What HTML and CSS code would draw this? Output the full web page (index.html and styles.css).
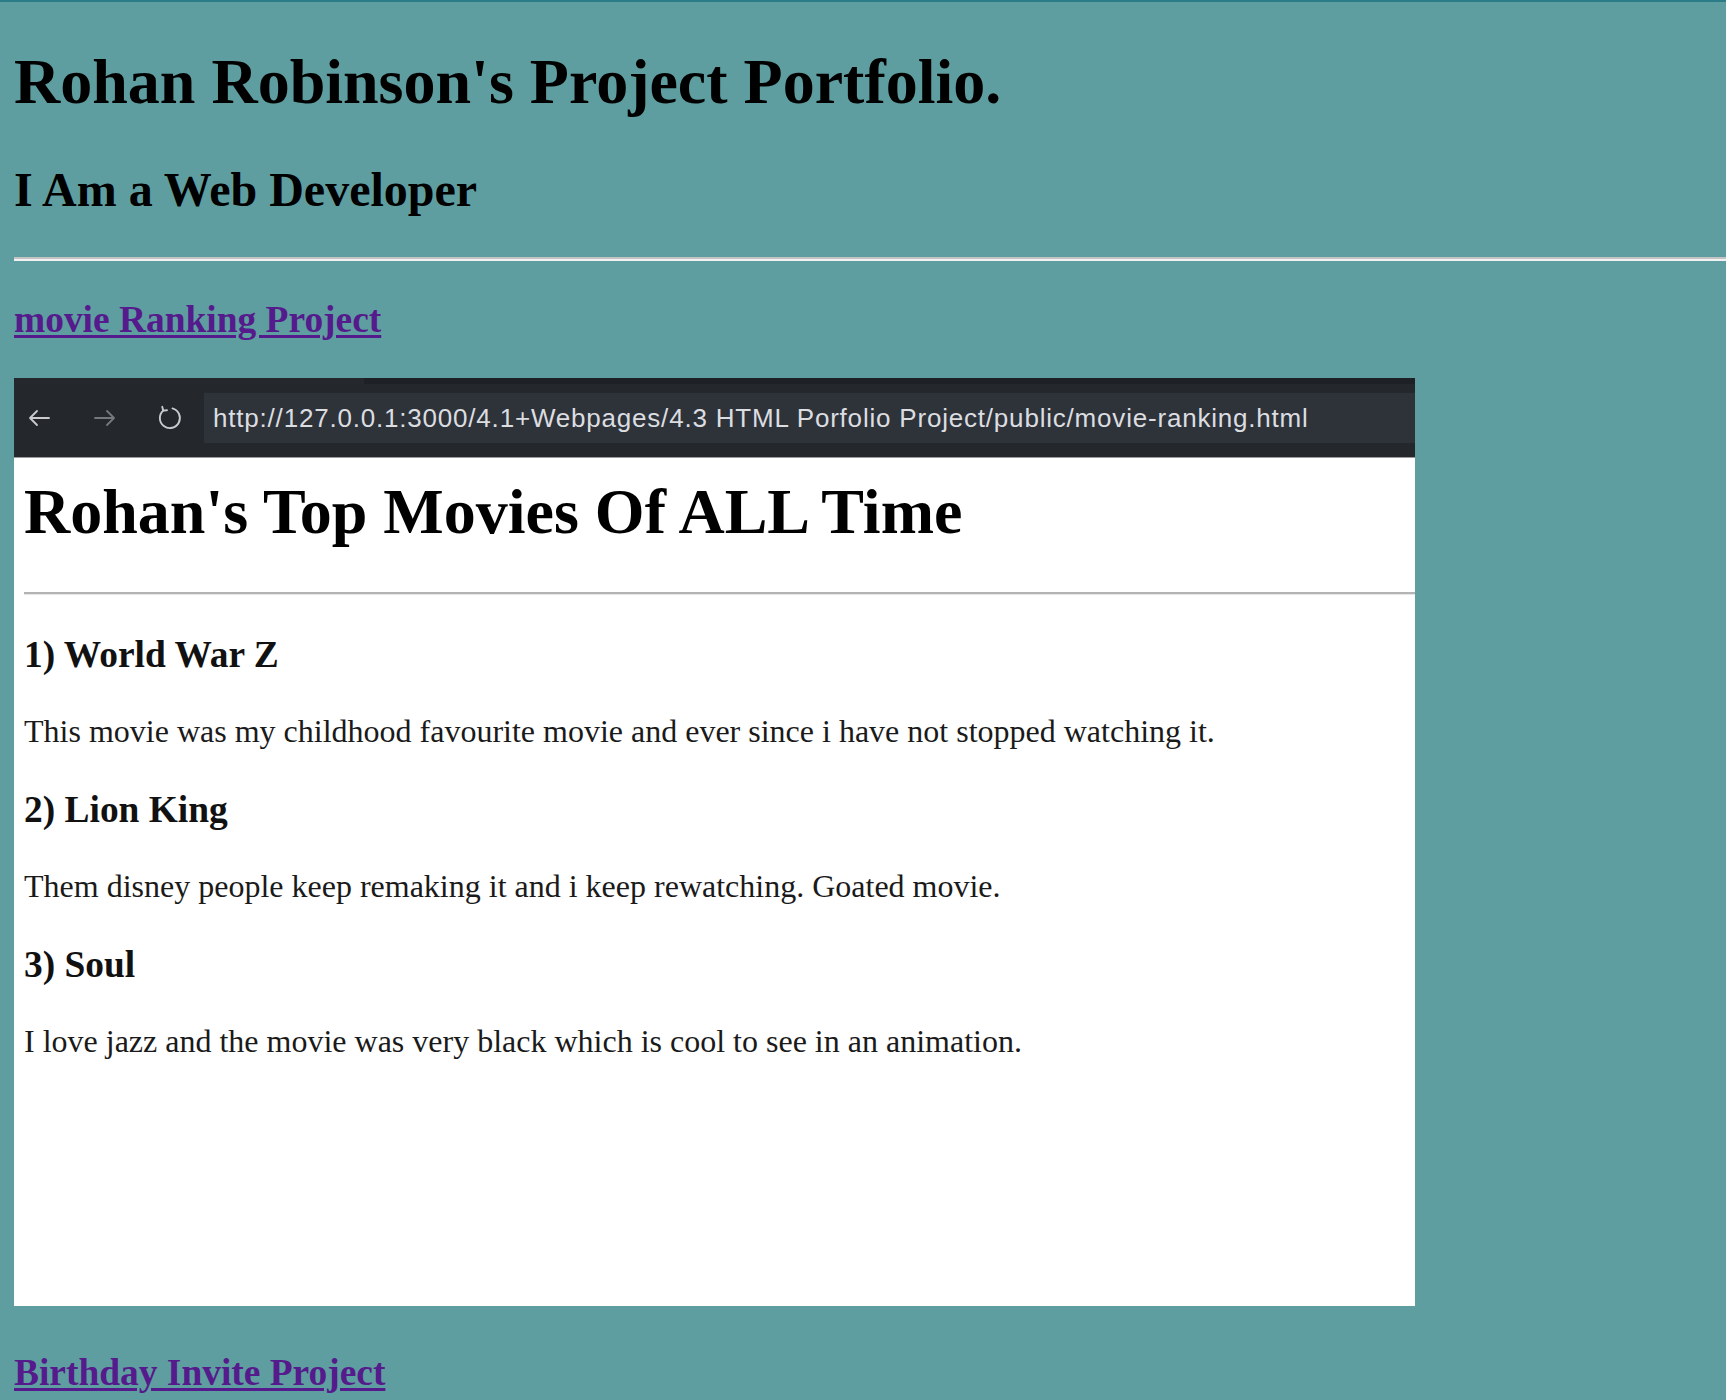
FILE: index.html
```html
<!DOCTYPE html>
<html lang="en">
<head>
<meta charset="utf-8">
<title>Rohan Robinson's Project Portfolio</title>
<link rel="stylesheet" href="styles.css">
</head>
<body>
<div class="page">
  <h1 class="title">Rohan Robinson's Project Portfolio.</h1>
  <h2 class="subtitle">I Am a Web Developer</h2>
  <hr class="rule">
  <h3 class="project"><a class="project-link" href="#">movie Ranking Project</a></h3>
  <div class="shot">
    <div class="toolbar">
      <div class="tabstrip"><span class="tabstrip-gap"></span><span class="tabstrip-dark"></span></div>
      <div class="navrow">
        <svg class="nav-icon back" viewBox="0 0 26 26" width="26" height="26"><path d="M23 13H4M11 6L4 13L11 20" fill="none" stroke="currentColor" stroke-width="1.8" stroke-linecap="round" stroke-linejoin="round"/></svg>
        <svg class="nav-icon fwd" viewBox="0 0 26 26" width="26" height="26"><path d="M3 13H22M15 6L22 13L15 20" fill="none" stroke="currentColor" stroke-width="1.8" stroke-linecap="round" stroke-linejoin="round"/></svg>
        <svg class="nav-icon reload" viewBox="0 0 26 26" width="26" height="26"><path d="M15.5 3.4A10 10 0 1 1 6.2 5.6" fill="none" stroke="currentColor" stroke-width="1.9" stroke-linecap="round"/><path d="M5.2 1.8L6.2 5.6L10 5.2" fill="none" stroke="currentColor" stroke-width="1.9" stroke-linecap="round" stroke-linejoin="round"/></svg>
        <div class="urlbar">http://127.0.0.1:3000/4.1+Webpages/4.3 HTML Porfolio Project/public/movie-ranking.html</div>
      </div>
    </div>
    <div class="shot-page">
      <h1 class="shot-title">Rohan's Top Movies Of ALL Time</h1>
      <hr class="shot-rule">
      <h3 class="movie">1) World War Z</h3>
      <p class="review">This movie was my childhood favourite movie and ever since i have not stopped watching it.</p>
      <h3 class="movie">2) Lion King</h3>
      <p class="review">Them disney people keep remaking it and i keep rewatching. Goated movie.</p>
      <h3 class="movie">3) Soul</h3>
      <p class="review">I love jazz and the movie was very black which is cool to see in an animation.</p>
    </div>
  </div>
  <h3 class="project project-after-shot"><a class="project-link" href="#">Birthday Invite Project</a></h3>
</div>
</body>
</html>
```

FILE: styles.css
```css
html, body {
  margin: 0;
  padding: 0;
}
body {
  background: #5f9ea0;
  font-family: "Liberation Serif", "Times New Roman", serif;
  color: #000;
  overflow: hidden;
}
.page {
  border-top: 2px solid #2b7c86;
  padding-left: 14px;
  min-height: 1398px;
}
.title {
  font-size: 64px;
  font-weight: bold;
  margin: 42.88px 0;
}
.subtitle {
  font-size: 48px;
  font-weight: bold;
  margin: 39.84px 0;
}
.rule {
  margin: 16px 0;
  height: 0;
  border: 0;
  border-top: 2px solid #c4c4c4;
  border-bottom: 2px solid #f2f2f2;
}
.project {
  font-size: 37.44px;
  font-weight: bold;
  margin: 37.44px 0;
}
.project-after-shot {
  margin-top: 45px;
}
.project-link {
  color: #551a8b;
  text-decoration: underline;
  text-decoration-thickness: 3px;
  text-underline-offset: 3px;
}
.shot {
  width: 1401px;
  height: 928px;
  display: flex;
  flex-direction: column;
  background: #fff;
}
.toolbar {
  background: #24282d;
  height: 79px;
  border-bottom: 1px solid #9a9a9a;
  display: flex;
  flex-direction: column;
}
.tabstrip {
  height: 15px;
  display: flex;
}
.tabstrip-gap {
  width: 350px;
}
.tabstrip-dark {
  flex: 1;
  height: 6px;
  background: #1d2024;
}
.navrow {
  height: 50px;
  display: flex;
  align-items: center;
}
.nav-icon {
  flex: none;
}
.back {
  color: #c9cbcd;
  margin-left: 12px;
}
.fwd {
  color: #75787c;
  margin-left: 40px;
}
.reload {
  color: #c9cbcd;
  margin-left: 39px;
}
.urlbar {
  margin-left: 21px;
  flex: 1;
  height: 50px;
  background: #2e333a;
  color: #dcdde0;
  font-family: "Liberation Sans", Arial, sans-serif;
  font-size: 26px;
  letter-spacing: 0.8px;
  line-height: 50px;
  padding-left: 9px;
  white-space: nowrap;
  overflow: hidden;
}
.shot-page {
  flex: 1;
  background: #fff;
  padding-left: 10px;
  overflow: hidden;
  display: flow-root;
}
.shot-title {
  font-size: 64px;
  font-weight: bold;
  margin: 17px 0 42.88px;
}
.shot-rule {
  margin: 16px 0;
  height: 0;
  border: 0;
  border-top: 2px solid #b4b4b4;
  border-bottom: 1px solid #e6e6e6;
}
.movie {
  font-size: 37.44px;
  font-weight: bold;
  margin: 37.44px 0;
  color: #111;
}
.review {
  font-size: 32px;
  margin: 32px 0;
  color: #1a1a1a;
}
```
